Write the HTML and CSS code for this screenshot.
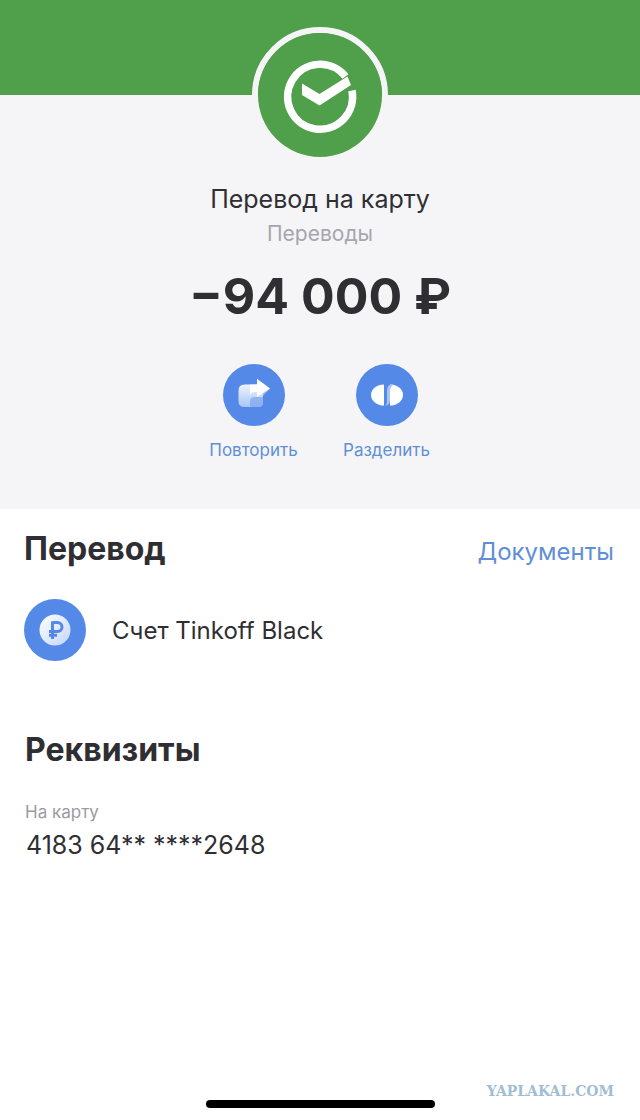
FILE: index.html
```html
<!DOCTYPE html>
<html lang="ru">
<head>
  <meta charset="UTF-8" />
  <meta name="viewport" content="width=device-width, initial-scale=1.0" />
  <title>Перевод на карту</title>
  <link rel="stylesheet" href="styles.css">
</head>
<body>
  <div class="top-bar"></div>

  <section class="summary">
    <div class="logo">
      <svg width="124" height="124" viewBox="0 0 124 124">
        <circle cx="62" cy="62" r="62" fill="#4f9f4b" />
        <path d="M87.5 43.5A32.5 32.5 0 1 0 94 57.5" fill="none" stroke="#fff" stroke-width="7.5" />
        <path d="M44 50.5 L44 62 L61.500 72.500 L93 52 L89.500 43.500 L61.500 61 Z" fill="#fff" />
      </svg>
    </div>
    <div class="title">Перевод на карту</div>
    <div class="category">Переводы</div>
    <div class="amount">−94 000 ₽</div>

    <div class="actions">
      <div class="action">
        <div class="action-icon">
          <svg width="62" height="62" viewBox="0 0 62 62">
            <defs>
              <linearGradient id="fade" x1="0" y1="0" x2="0" y2="1">
                <stop offset="0" stop-color="#fff" />
                <stop offset="1" stop-color="#a9c5f5" />
              </linearGradient>
            </defs>
            <path d="M21.500 20.500H34V15L47 24.500L40 31.500V38.500Q40 43 35 43H21.500Q15.500 43 15.500 37V26.500Q15.500 20.500 21.500 20.500Z" fill="url(#fade)" />
            <path d="M33 33Q27 32.500 27 38V43H35Q40 43 40 38.500V31.500L47 24.500L40 19V33Z" fill="#82a9ee" opacity="0.75" />
            <path d="M34 20.500V15L47 24.500L34 33V28H32Q27 28 27 33V20.500Z" fill="#fff" />
          </svg>
        </div>
        <div class="action-label">Повторить</div>
      </div>
      <div class="action">
        <div class="action-icon">
          <svg width="62" height="62" viewBox="0 0 62 62">
            <path d="M28 20.500A13 10.500 0 0 0 28 41.500Z" fill="#fff" />
            <path d="M34 20.500A13 10.500 0 0 1 34 41.500Z" fill="#fff" />
            <path d="M29 41.500Q31 41 31 36V27Q31 21 35 20.500H38Q34 22 34 28V35Q34 41 30 41.500Z" fill="#a9c5f5" />
          </svg>
        </div>
        <div class="action-label">Разделить</div>
      </div>
    </div>
  </section>

  <section class="details">
    <div class="section-head">
      <h2>Перевод</h2>
      <a class="docs">Документы</a>
    </div>
    <div class="account">
      <div class="account-icon">
        <svg width="62" height="62" viewBox="0 0 62 62">
          <defs>
            <linearGradient id="coin" x1="0" y1="0" x2="1" y2="1">
              <stop offset="0" stop-color="#fff" />
              <stop offset="1" stop-color="#c3d6f7" />
            </linearGradient>
          </defs>
          <circle cx="31" cy="31" r="15.500" fill="url(#coin)" />
          <path d="M28.500 22.500V40M28.500 23.500H33.500A4.500 4.500 0 0 1 33.500 32.500H25M25 36.200H33" fill="none" stroke="#5489e8" stroke-width="3" />
        </svg>
      </div>
      <div class="account-name">Счет Tinkoff Black</div>
    </div>

    <h2 class="requisites">Реквизиты</h2>
    <div class="field-label">На карту</div>
    <div class="field-value">4183 64** ****2648</div>
  </section>

  <div class="watermark">YAPLAKAL.COM</div>
  <div class="home-bar"></div>
</body>
</html>
```

FILE: styles.css
```css
html, body {
  height: 100%;
}
body {
  margin: 0;
  position: relative;
  overflow: hidden;
  background-color: #fff;
  font-family: Inter, "Noto Sans", sans-serif;
  color: #2f2f33;
}
.top-bar {
  height: 95px;
  background-color: #4f9f4b;
}
.summary {
  height: 414px;
  background-color: #f5f5f8;
  display: flex;
  flex-direction: column;
  align-items: center;
}
.logo {
  width: 124px;
  height: 124px;
  margin-top: -68px;
  border: 6px solid #f5f5f8;
  border-radius: 50%;
  flex-shrink: 0;
}
.logo svg {
  display: block;
}
.title {
  margin-top: 20px;
  font-size: 25px;
  line-height: 32px;
}
.category {
  margin-top: 5px;
  font-size: 21px;
  line-height: 28px;
  color: #a6a6ae;
}
.amount {
  margin-top: 18px;
  font-size: 50px;
  line-height: 60px;
  font-weight: 700;
}
.actions {
  display: flex;
  gap: 37px;
  margin-top: 38px;
}
.action {
  width: 96px;
  display: flex;
  flex-direction: column;
  align-items: center;
}
.action-icon, .account-icon {
  width: 62px;
  height: 62px;
  border-radius: 50%;
  background-color: #5489e8;
  flex-shrink: 0;
}
.action-icon svg, .account-icon svg {
  display: block;
}
.action-label {
  margin-top: 12px;
  font-size: 17px;
  line-height: 24px;
  white-space: nowrap;
  color: #5f8fd6;
}
.details {
  padding: 0 26px 0 24px;
}
.section-head {
  display: flex;
  justify-content: space-between;
  align-items: center;
  margin-top: 20px;
  height: 40px;
}
h2 {
  margin: 0;
  font-size: 32px;
  line-height: 40px;
  font-weight: 700;
}
.docs {
  font-size: 24px;
  color: #5f8fd6;
  margin-top: 5px;
}
.account {
  display: flex;
  align-items: center;
  gap: 26px;
  margin-top: 30px;
}
.account-name {
  font-size: 24px;
}
.requisites {
  margin: 69px 0 0 1px;
}
.field-label {
  margin: 31px 0 0 1px;
  font-size: 17px;
  line-height: 22px;
  color: #9a9aa2;
}
.field-value {
  margin: 6px 0 0 2px;
  font-size: 25px;
  line-height: 32px;
}
.watermark {
  position: absolute;
  right: 26px;
  top: 1082px;
  font-family: "DejaVu Serif", serif;
  font-weight: 700;
  font-size: 14px;
  line-height: 18px;
  color: #9fbdd3;
}
.home-bar {
  position: absolute;
  left: 206px;
  top: 1100px;
  width: 229px;
  height: 8px;
  border-radius: 4px;
  background-color: #000;
}
```
